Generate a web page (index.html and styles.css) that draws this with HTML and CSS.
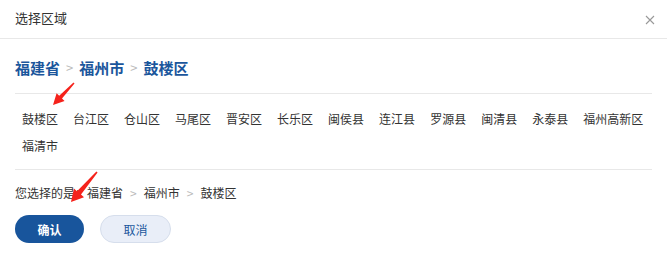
FILE: index.html
```html
<!DOCTYPE html>
<html lang="zh">
<head>
<meta charset="utf-8">
<link rel="stylesheet" href="styles.css">
</head>
<body>
<div class="dialog">
  <div class="header">
    <span class="title">选择区域</span>
    <svg class="close" width="10" height="10" viewBox="0 0 10 10"><path d="M1 1L9 9M9 1L1 9" stroke="#999" stroke-width="1.1" fill="none"/></svg>
  </div>
  <div class="body">
    <div class="crumb">
      <span>福建省</span><span class="sep">&gt;</span><span>福州市</span><span class="sep">&gt;</span><span>鼓楼区</span>
    </div>
    <div class="items">
      <span class="item">鼓楼区</span>
      <span class="item">台江区</span>
      <span class="item">仓山区</span>
      <span class="item">马尾区</span>
      <span class="item">晋安区</span>
      <span class="item">长乐区</span>
      <span class="item">闽侯县</span>
      <span class="item">连江县</span>
      <span class="item">罗源县</span>
      <span class="item">闽清县</span>
      <span class="item">永泰县</span>
      <span class="item">福州高新区</span>
      <span class="item">福清市</span>
    </div>
    <div class="chosen">您选择的是：福建省<span class="sep2">&gt;</span>福州市<span class="sep2">&gt;</span>鼓楼区</div>
    <div class="buttons">
      <button class="btn primary">确认</button>
      <button class="btn ghost">取消</button>
    </div>
  </div>
  <svg class="arrows" width="667" height="256" viewBox="0 0 667 256">
    <path d="M53 105 L64.6 100.9 L62 98.5 L74.5 83.4 L73.5 82.6 L59.2 95.7 L56.6 93.2 Z" fill="#f5221b"/>
    <path d="M71 202 L84 197.2 L81 194.5 L97.6 172.5 L96.4 171.5 L77 191.3 L73.9 188.6 Z" fill="#f5221b"/>
  </svg>
</div>
</body>
</html>
```
FILE: styles.css
```css
* { box-sizing: border-box; }
body {
  margin: 0;
  background: #fff;
  font-family: "Noto Sans CJK SC", "Liberation Sans", sans-serif;
  color: #333;
}
.dialog {
  position: relative;
  width: 667px;
  height: 256px;
  background: #fff;
}
.header {
  height: 39px;
  border-bottom: 1px solid #e8e8e8;
  display: flex;
  align-items: center;
  justify-content: space-between;
  padding: 0 12px 0 15px;
}
.title {
  font-size: 13px;
  color: #333;
  margin-top: -3px;
}
.close { margin-top: 2px; }
.body {
  padding: 0 15px;
}
.crumb {
  height: 55px;
  display: flex;
  align-items: center;
  font-size: 15px;
  font-weight: bold;
  color: #1b569c;
  border-bottom: 1px solid #e8e8e8;
  padding-top: 2px;
}
.sep {
  color: #bbb;
  font-weight: normal;
  font-size: 13px;
  margin: 0 6px;
}
.items {
  display: flex;
  flex-wrap: wrap;
  column-gap: 15px;
  padding: 11px 7px 10px;
  border-bottom: 1px solid #e8e8e8;
  font-size: 12px;
  line-height: 27px;
  color: #333;
}
.item { white-space: nowrap; }
.chosen {
  font-size: 12px;
  color: #333;
  height: 45px;
  display: flex;
  align-items: center;
  padding-top: 0;
}
.sep2 {
  color: #bbb;
  margin: 0 7px;
}
.buttons {
  display: flex;
  gap: 16px;
}
.btn {
  height: 28px;
  border-radius: 14px;
  font-family: inherit;
  font-size: 12px;
  padding: 0;
  cursor: pointer;
}
.primary {
  width: 69px;
  background: #18559c;
  color: #fff;
  border: none;
  font-weight: bold;
}
.ghost {
  width: 71px;
  background: #e9eef8;
  color: #1b569c;
  border: 1px solid #d6deec;
}
.arrows {
  position: absolute;
  left: 0;
  top: 0;
  pointer-events: none;
}
```
